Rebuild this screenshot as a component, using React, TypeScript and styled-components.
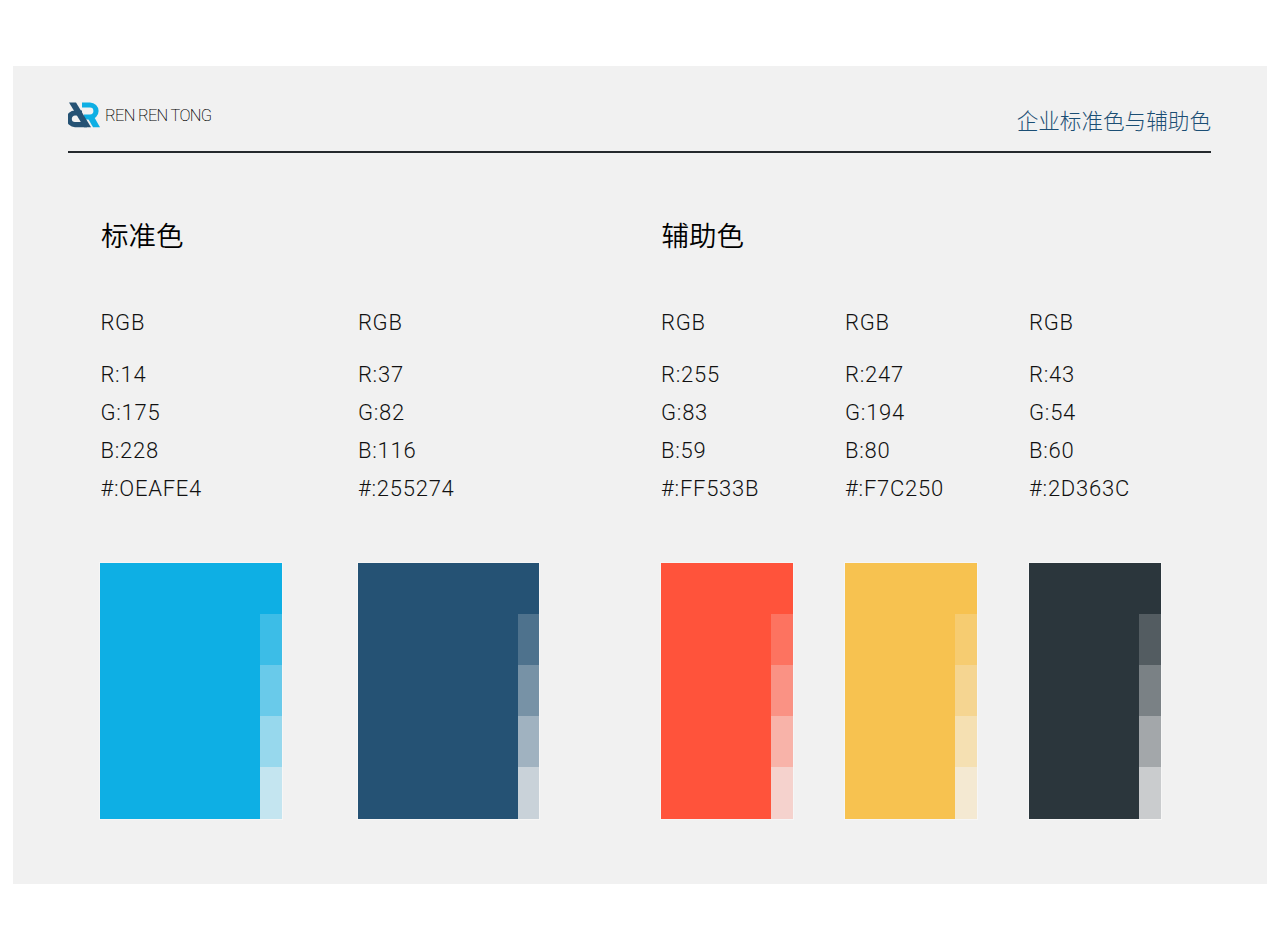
import styled, { createGlobalStyle } from "styled-components";

const GlobalStyle = createGlobalStyle`
  html, body {
    margin: 0;
    background: #ffffff;
  }
`;

const fontStack = `"Roboto", "Noto Sans CJK SC", sans-serif`;

const Page = styled.div`
  width: 1280px;
  height: 950px;
  padding: 66px 13px 0;
  box-sizing: border-box;
  font-family: ${fontStack};
`;

const Panel = styled.div`
  height: 818px;
  box-sizing: border-box;
  padding: 36px 56px 0 55px;
  background: #f1f1f1;
`;

const Header = styled.header`
  height: 49px;
  display: flex;
  justify-content: space-between;
  align-items: flex-start;
  border-bottom: 2px solid #24292d;
`;

const Logo = styled.div`
  display: flex;
  align-items: center;
  gap: 5px;
`;

const LogoName = styled.span`
  font-size: 16.5px;
  font-weight: 200;
  color: #000000;
  letter-spacing: -0.7px;
  white-space: nowrap;
`;

const PageTitle = styled.span`
  margin-top: 3px;
  font-family: "Noto Sans CJK SC", sans-serif;
  font-size: 21.6px;
  font-weight: 300;
  line-height: 30px;
  color: #1b4e74;
`;

const Groups = styled.div`
  display: flex;
  padding: 61px 0 0 32.4px;
`;

const Group = styled.section<{ $width: number }>`
  width: ${(p) => p.$width}px;
`;

const GroupTitle = styled.h2`
  margin: 0 0 50px;
  padding-left: 0.6px;
  font-family: "Noto Sans CJK SC", sans-serif;
  font-size: 27.5px;
  font-weight: 350;
  line-height: 40px;
  color: #000000;
`;

const Columns = styled.div<{ $gap: number }>`
  display: flex;
  gap: ${(p) => p.$gap}px;
`;

const Column = styled.div<{ $width: number }>`
  width: ${(p) => p.$width}px;
`;

const Label = styled.div`
  margin-bottom: 14px;
  font-size: 22px;
  font-weight: 300;
  line-height: 37.7px;
  color: #111111;
  letter-spacing: 0.75px;
`;

const Value = styled.div`
  font-size: 22px;
  font-weight: 300;
  line-height: 38px;
  color: #111111;
  letter-spacing: 0.75px;
`;

const Swatch = styled.div<{ $color: string }>`
  margin-top: 54.8px;
  height: 256px;
  display: flex;
  justify-content: flex-end;
  align-items: flex-end;
  background: ${(p) => p.$color};
  box-shadow: 0 0 0 1px rgba(255, 255, 255, 0.35);
`;

const Tints = styled.div`
  width: 21.5px;
  display: flex;
  flex-direction: column;
`;

const Tint = styled.div<{ $alpha: number }>`
  height: 51.25px;
  background: rgba(243, 243, 243, ${(p) => p.$alpha});
`;

const TINT_ALPHAS = [0.2, 0.4, 0.6, 0.8];

type Spec = { r: number; g: number; b: number; hex: string; color: string };

const STANDARD: Spec[] = [
  { r: 14, g: 175, b: 228, hex: "OEAFE4", color: "#0eafe4" },
  { r: 37, g: 82, b: 116, hex: "255274", color: "#255274" },
];

const AUXILIARY: Spec[] = [
  { r: 255, g: 83, b: 59, hex: "FF533B", color: "#ff533b" },
  { r: 247, g: 194, b: 80, hex: "F7C250", color: "#f7c250" },
  { r: 43, g: 54, b: 60, hex: "2D363C", color: "#2b363c" },
];

const ColorColumn = ({ spec, width }: { spec: Spec; width: number }) => (
  <Column $width={width}>
    <Label>RGB</Label>
    <Value>R:{spec.r}</Value>
    <Value>G:{spec.g}</Value>
    <Value>B:{spec.b}</Value>
    <Value>#:{spec.hex}</Value>
    <Swatch $color={spec.color}>
      <Tints>
        {TINT_ALPHAS.map((a) => (
          <Tint key={a} $alpha={a} />
        ))}
      </Tints>
    </Swatch>
  </Column>
);

const LogoMark = () => (
  <svg width="32" height="26" viewBox="0 0 32 26">
    <path d="M14 3h8a6 6 0 0 1 0 12h-6" fill="none" stroke="#0eafe4" strokeWidth="5.2" />
    <path d="M18 13h7l7 12.3h-7z" fill="#0eafe4" />
    <path d="M14 11H7a5.8 5.8 0 0 0 0 11.6h12" fill="none" stroke="#255274" strokeWidth="5.2" />
    <path d="M1 .5h7l15 24.8h-7z" fill="#255274" />
  </svg>
);

const App = () => (
  <Page>
    <GlobalStyle />
    <Panel>
      <Header>
        <Logo>
          <LogoMark />
          <LogoName>REN REN TONG</LogoName>
        </Logo>
        <PageTitle>企业标准色与辅助色</PageTitle>
      </Header>
      <Groups>
        <Group $width={560.6}>
          <GroupTitle>标准色</GroupTitle>
          <Columns $gap={76}>
            {STANDARD.map((s) => (
              <ColorColumn key={s.hex} spec={s} width={181.5} />
            ))}
          </Columns>
        </Group>
        <Group $width={500}>
          <GroupTitle>辅助色</GroupTitle>
          <Columns $gap={52}>
            {AUXILIARY.map((s) => (
              <ColorColumn key={s.hex} spec={s} width={132} />
            ))}
          </Columns>
        </Group>
      </Groups>
    </Panel>
  </Page>
);

export default App;
